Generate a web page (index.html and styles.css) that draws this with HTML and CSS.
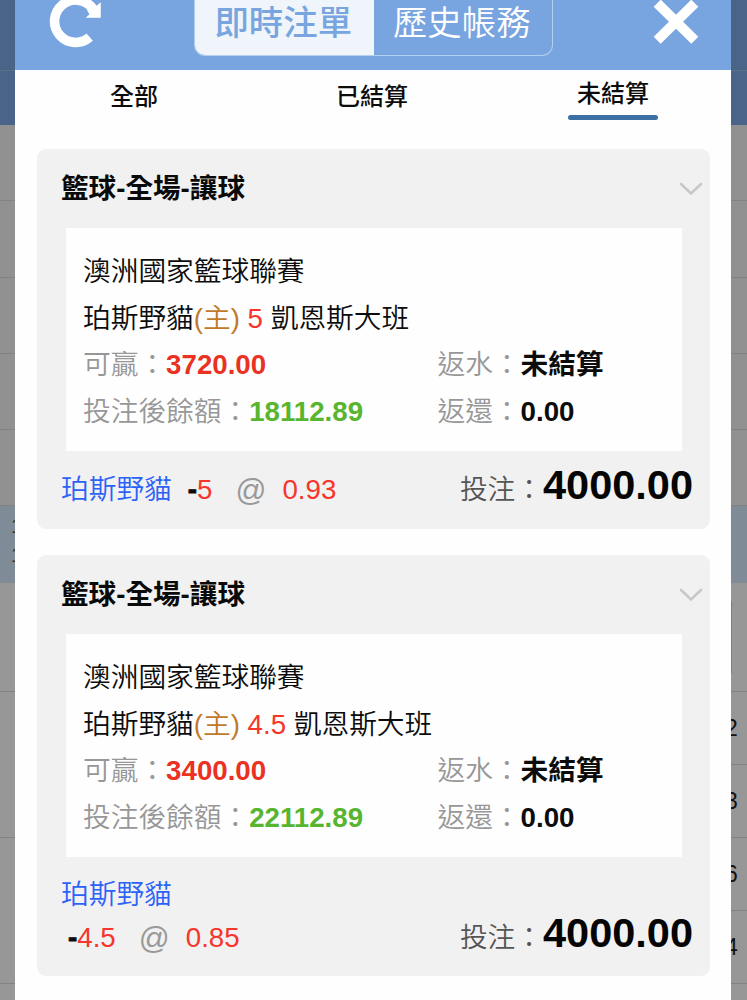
FILE: index.html
```html
<!DOCTYPE html>
<html lang="zh-Hant">
<head>
<meta charset="utf-8">
<title>即時注單</title>
<link rel="stylesheet" href="styles.css">
</head>
<body>
<div class="screen">
  <div class="strip left">
    <div class="band top"></div>
    <div class="band bar"></div>
    <div class="band row"></div>
    <div class="band row"></div>
    <div class="band row"></div>
    <div class="band row"></div>
    <div class="band row"></div>
    <div class="band blue"><span class="peek">1</span><span class="peek">1</span></div>
    <div class="band gap"></div>
    <div class="band tall"></div>
    <div class="band tall"></div>
    <div class="band rest"></div>
  </div>
  <main class="modal">
    <header class="head">
      <svg class="refresh" viewBox="0 0 56 56" width="56" height="56">
        <path d="M43.7 44.2A21.2 21.2 0 1 1 46 14.6" fill="none" stroke="#fff" stroke-width="9.6"/>
        <path d="M54.8 9.2V24.8H39.8L43.4 21.2L41 17L48 10L50.6 12.8Z" fill="#fff"/>
      </svg>
      <div class="switch">
        <span class="opt on">即時注單</span>
        <span class="opt">歷史帳務</span>
      </div>
      <svg class="close" viewBox="0 0 46 50" width="46" height="50">
        <path d="M4.2 7.2L41.8 44.3M41.8 7.2L4.2 44.3" fill="none" stroke="#fff" stroke-width="10"/>
      </svg>
    </header>
    <nav class="tabs">
      <div class="tab"><span class="label">全部</span></div>
      <div class="tab middle"><span class="label">已結算</span></div>
      <div class="tab active"><span class="label">未結算</span></div>
    </nav>
    <section class="card">
      <div class="title"><span>籃球<b>-</b>全場<b>-</b>讓球</span>
        <svg class="chev" viewBox="0 0 24 14" width="24" height="14"><path d="M2 2L12 11.5L22 2" fill="none" stroke="#c8c8c8" stroke-width="2.6" stroke-linecap="round"/></svg>
      </div>
      <div class="panel">
        <div class="line">澳洲國家籃球聯賽</div>
        <div class="line">珀斯野貓<span class="home">(主)</span> <span class="red">5</span> 凱恩斯大班</div>
        <div class="line pair"><span class="cell"><span class="key">可贏：</span><b class="red strong">3720.00</b></span><span class="cell"><span class="key">返水：</span><b>未結算</b></span></div>
        <div class="line pair"><span class="cell"><span class="key">投注後餘額：</span><b class="green">18112.89</b></span><span class="cell"><span class="key">返還：</span><b>0.00</b></span></div>
      </div>
      <div class="foot">
        <div class="pick"><span class="team">珀斯野貓</span><span class="odds one"><b class="minus">-</b><span class="red">5</span><span class="at">@</span><span class="red">0.93</span></span></div>
        <div class="stake"><span class="skey">投注：</span><b class="amount">4000.00</b></div>
      </div>
    </section>
    <section class="card second">
      <div class="title"><span>籃球<b>-</b>全場<b>-</b>讓球</span>
        <svg class="chev" viewBox="0 0 24 14" width="24" height="14"><path d="M2 2L12 11.5L22 2" fill="none" stroke="#c8c8c8" stroke-width="2.6" stroke-linecap="round"/></svg>
      </div>
      <div class="panel">
        <div class="line">澳洲國家籃球聯賽</div>
        <div class="line">珀斯野貓<span class="home">(主)</span> <span class="red">4.5</span> 凱恩斯大班</div>
        <div class="line pair"><span class="cell"><span class="key">可贏：</span><b class="red strong">3400.00</b></span><span class="cell"><span class="key">返水：</span><b>未結算</b></span></div>
        <div class="line pair"><span class="cell"><span class="key">投注後餘額：</span><b class="green">22112.89</b></span><span class="cell"><span class="key">返還：</span><b>0.00</b></span></div>
      </div>
      <div class="foot tallfoot">
        <div class="pick stacked"><span class="team">珀斯野貓</span><span class="odds two"><b class="minus">-</b><span class="red">4.5</span><span class="at">@</span><span class="red">0.85</span></span></div>
        <div class="stake"><span class="skey">投注：</span><b class="amount">4000.00</b></div>
      </div>
    </section>
  </main>
  <div class="strip right">
    <div class="band top"></div>
    <div class="band bar"></div>
    <div class="band row"></div>
    <div class="band row"></div>
    <div class="band row"></div>
    <div class="band row"></div>
    <div class="band row"></div>
    <div class="band blue"></div>
    <div class="band gap"><i class="sliver"></i></div>
    <div class="band num"><span class="digit">2</span></div>
    <div class="band num"><span class="digit">3</span></div>
    <div class="band num"><span class="digit">6</span></div>
    <div class="band num"><span class="digit">4</span></div>
    <div class="band rest"></div>
  </div>
</div>
</body>
</html>
```
FILE: styles.css
```css
* { box-sizing: border-box; }
body {
  margin: 0;
  font-family: "Liberation Sans", "Noto Sans CJK TC", sans-serif;
  font-size: 27.7px;
  color: #0c0c0c;
  background: #949494;
}
.screen { display: grid; grid-template-columns: 15px 716px 16px; height: 1000px; overflow: hidden; }

.strip { display: flex; flex-direction: column; overflow: hidden; background: #979797; }
.band { flex: none; overflow: hidden; border-bottom: 1px solid #828282; }
.top { height: 71px; background: #4a6488; border-color: #5b7086; }
.bar { height: 54px; background: #496488; border: 0; }
.row { height: 76.3px; background: #919191; }
.blue { height: 76.5px; background: #7f8b97; border-color: #858b90; padding: 9px 0 0 11px; display: flex; flex-direction: column; }
.peek { font-size: 20px; height: 29px; line-height: 22px; color: #333; }
.gap { height: 109px; padding-top: 18px; }
.sliver { display: block; width: 1px; height: 72px; background: #6f8584; }
.tall { height: 146px; }
.num { height: 73px; display: flex; align-items: center; }
.digit { font-size: 23px; line-height: 28px; margin: 1px 0 0 -6px; color: #111; }
.rest { height: 40px; border: 0; }

.modal { background: #fefefe; overflow: hidden; }
.head { height: 70px; background: #78a5e0; display: flex; align-items: flex-start; padding: 0 31px 0 31px; }
.refresh { flex: none; margin-top: -7px; }
.switch { display: flex; height: 56px; width: 359px; margin-left: 92px; border: 1.5px solid #b4d0ef; border-top: 0; border-radius: 0 0 11px 11px; overflow: hidden; }
.opt { flex: 1; text-align: center; text-indent: -2px; font-size: 34.4px; line-height: 47px; color: #fff; font-weight: 350; }
.on { background: #eff5fa; color: #78a5e0; font-weight: 500; }
.close { flex: none; margin-left: 100px; margin-top: -4px; }

.tabs { display: flex; height: 79px; justify-content: space-between; padding: 0 73px 0 74px; font-size: 24px; font-weight: 500; line-height: 30px; }
.tab { width: 90px; text-align: center; padding-top: 12px; }
.middle { text-indent: -3px; }
.active { padding-top: 8px; }
.active .label { display: block; padding-top: 1px; }
.active::after { content: ""; display: block; height: 5px; margin-top: 6px; border-radius: 3px; background: #3a70a3; }

.card { height: 379.5px; margin: 0 21px 0 22px; background: #f1f1f1; border-radius: 9px; }
.second { height: 421px; margin-top: 26.5px; }
.title { height: 79px; padding: 0 7px 0 24px; display: flex; align-items: center; justify-content: space-between; font-size: 27.6px; font-weight: 600; color: #0a0a0a; }
.title span { padding-bottom: 5px; }
.panel { height: 222.5px; width: 616.5px; margin-left: 28.5px; background: #fefefe; padding: 19.5px 0 0 17.5px; }
.line { height: 47px; line-height: 47px; white-space: pre; font-weight: 350; }
.pair { display: grid; grid-template-columns: 354.5px 1fr; }
.pair .cell { line-height: 46px; }
.key { color: #979797; font-weight: 350; }
.home { color: #c07a2c; }
.red { color: #f6362b; }
.strong { color: #ea3223; }
.green { color: #58b530; }
.pair b { font-weight: 600; }

.foot { height: 78px; display: flex; justify-content: space-between; padding: 0 17px 0 24px; line-height: 40px; font-weight: 350; }
.pick { display: flex; padding-top: 19px; }
.stacked { flex-direction: column; }
.tallfoot { height: 120px; padding-top: 0; }
.tallfoot .pick { padding-top: 18px; }
.tallfoot .stake { padding-top: 56px; }
.team { color: #2c62f7; }
.odds { display: flex; white-space: pre; }
.minus { -webkit-text-stroke: 0.8px #0c0c0c; }
.one { margin-left: 16px; }
.two { margin-left: 7px; margin-top: 3px; }
.at { color: #999; font-size: 30.5px; width: 31px; margin: 0 16px 0 23px; }
.stake { display: flex; align-items: baseline; padding-top: 14px; }
.skey { color: #555; }
.amount { font-size: 41.5px; color: #050505; }
```
